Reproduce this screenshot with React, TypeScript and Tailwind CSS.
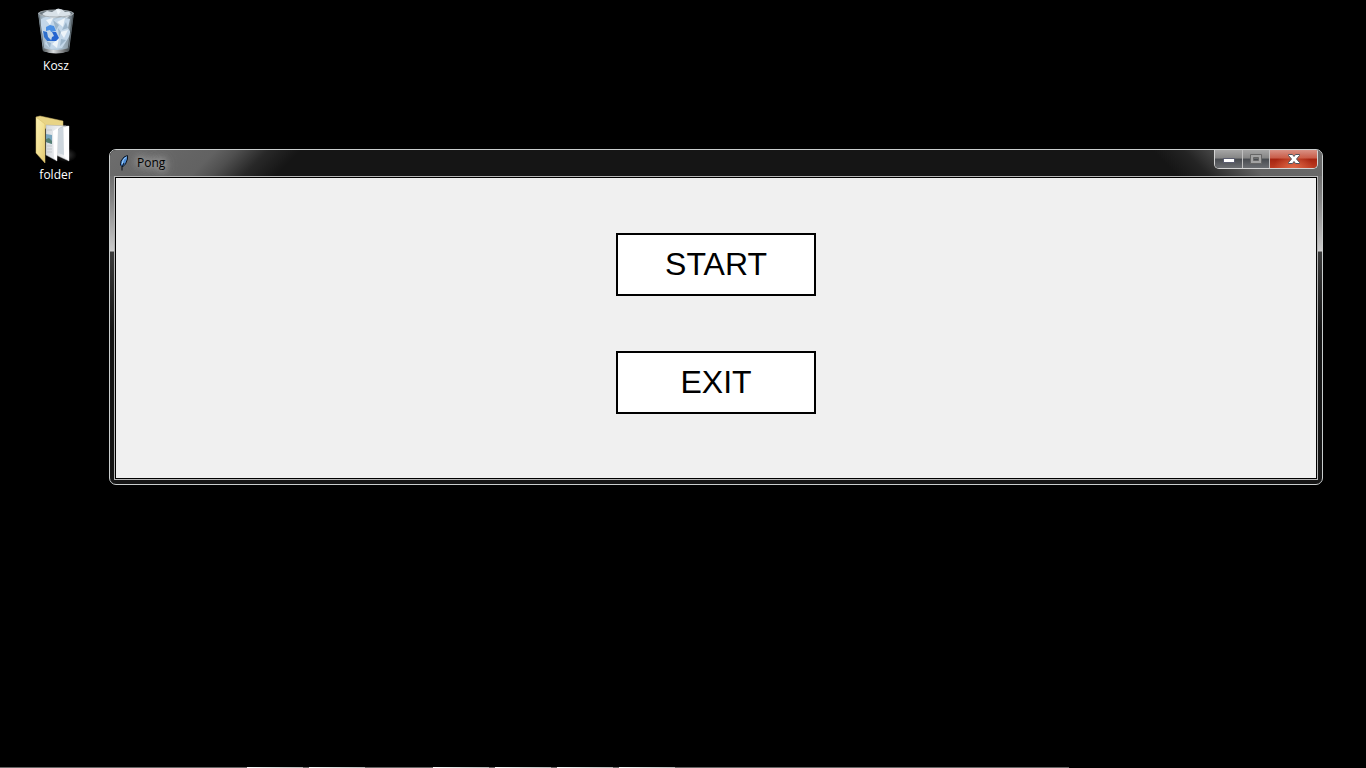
import type { ReactNode } from "react";

const RecycleBinIcon = () => (
  <svg width="48" height="50" viewBox="0 0 48 50" aria-hidden="true">
    <defs>
      <linearGradient id="bin-body" x1="0" x2="1" y1="0" y2="0">
        <stop offset="0" stopColor="#7d8b95" />
        <stop offset="0.15" stopColor="#a9bccb" />
        <stop offset="0.55" stopColor="#b4cbdd" />
        <stop offset="0.85" stopColor="#8a9aa5" />
        <stop offset="1" stopColor="#4d565c" />
      </linearGradient>
      <linearGradient id="bin-base" x1="0" x2="1" y1="0" y2="0">
        <stop offset="0" stopColor="#4b5154" />
        <stop offset="0.4" stopColor="#d9dcde" />
        <stop offset="1" stopColor="#3d4143" />
      </linearGradient>
    </defs>
    <path d="M6 7 L11 45 Q24 49 37 45 L42 7 Z" fill="url(#bin-body)" />
    <path d="M10.500 42 L11 45 Q24 50 37 45 L37.500 42 Q24 46 10.500 42Z" fill="url(#bin-base)" />
    <ellipse cx="24" cy="7.500" rx="17.500" ry="3.500" fill="#6c7880" stroke="#9aa2a7" />
    <path d="M10 8 L15 5 L20 6 L26 2.500 L30 3.500 L33 6 L37 5.500 L39 8 L35 12 L28 10 L20 13 L13 10 Z" fill="#d9e2e9" />
    <path d="M9 13 L16 10 L22 14 L29 11 L38 13 L36 22 L39 27 L35 34 L30 42 L19 43 L13 38 L14 34 L9 24 Z" fill="#c3d7e9" />
    <path d="M14 14 L21 12 L18 19Z M25 16 L33 12 L31 21Z M28 26 L36 24 L32 32Z M20 38 L27 32 L25 42Z M24 3 L29 5 L26 9Z" fill="#edf4f9" />
    <path d="M21 14 L27 19 L24 24Z M34 16 L30 24 L36 22Z M14 35 L19 37 L18 42Z M29 33 L34 34 L28 40Z M26 22 L29 26 L27 31Z" fill="#9cb5ca" />
    <path d="M14 21 L18 19 L22 20 L24 25 L19 26 L18 24 L14 25Z" fill="#4a8fe4" />
    <path d="M11 25 L15 26 L16 31 L20 35 L15 35 L12 31Z" fill="#2f70cc" />
    <path d="M20 26 L24 26 L27 32 L24 35 L19 35 L20 31 L22 30Z" fill="#2464cf" />
    <path d="M6.500 7 Q9 11 24 11 T41.500 7" fill="none" stroke="#aab2b8" />
    <path d="M7 9 L12 44" stroke="#6c7980" />
    <path d="M41 9 L36 44" stroke="#4e585e" />
  </svg>
);

const FolderIcon = () => (
  <svg width="48" height="50" viewBox="0 0 48 50" aria-hidden="true">
    <defs>
      <linearGradient id="folder-front" x1="0" x2="1" y1="0" y2="1">
        <stop offset="0" stopColor="#fbf0b4" />
        <stop offset="0.5" stopColor="#f3e295" />
        <stop offset="1" stopColor="#e2c870" />
      </linearGradient>
      <linearGradient id="folder-paper" x1="0" x2="1" y1="0" y2="0">
        <stop offset="0" stopColor="#d5dade" />
        <stop offset="0.6" stopColor="#eef0f2" />
        <stop offset="1" stopColor="#ffffff" />
      </linearGradient>
      <radialGradient id="folder-shadow">
        <stop offset="0" stopColor="#3c3c3c" />
        <stop offset="1" stopColor="#000000" />
      </radialGradient>
    </defs>
    <ellipse cx="34" cy="40" rx="11" ry="7" fill="url(#folder-shadow)" />
    <path d="M4 2 L8 1 L31 6 L31 14 L14 14Z" fill="#e8d486" stroke="#cdb566" strokeWidth="0.500" />
    <path d="M24 11 L37 11 L37 46 L24 40Z" fill="url(#folder-paper)" stroke="#b4b7b9" strokeWidth="0.500" />
    <path d="M25 15 Q26 12 31 12 L32 40 L26 38Z" fill="#cdd6dd" />
    <path d="M32 13 L37 11 L37 46 L32 41Z" fill="#fff" />
    <path d="M14 10 L34 11 Q26 12 25 17 L25 46 L14 40Z" fill="url(#folder-paper)" stroke="#a9acae" strokeWidth="0.500" />
    <path d="M14 19 L20 20 L20 29 L14 27Z" fill="#78a6bf" />
    <path d="M14 24 L17 23 L20 26 V29 L14 27Z" fill="#557f72" />
    <path d="M15 15 H20 M15 31 H20 M15 34 H20 M15 37 H20" stroke="#c3c8cc" />
    <path d="M21 16 L26 13 L25 46 L22 43Z" fill="#fff" />
    <path d="M4 2 L13 9 L13 48 L4 38Z" fill="url(#folder-front)" stroke="#d6bd68" strokeWidth="0.500" />
  </svg>
);

const FeatherIcon = () => (
  <svg width="12" height="16" viewBox="0 0 12 16" aria-hidden="true">
    <path d="M9.500 .5 L9.500 4 L7.500 9 L4.500 12 L2.500 10 L3 6 L6 2Z" fill="#4b8bd6" stroke="#0c1420" />
    <path d="M8.500 2 L5.500 4.500 L4 9" stroke="#a9d5f8" fill="none" />
    <path d="M6 8 L4 12 L4 15.500" stroke="#080d14" fill="none" />
  </svg>
);

const DesktopItem = ({ label, children }: { label: string; children: ReactNode }) => (
  <a href="#" className="flex h-[69px] w-20 flex-col items-center text-xs leading-4 text-white">
    {children}
    <span className="mt-0.5">{label}</span>
  </a>
);

const MenuButton = ({ children }: { children: ReactNode }) => (
  <button type="button" className="h-[63px] w-[200px] border-2 border-black bg-white pb-0.5 font-['Liberation_Sans',Arial,sans-serif] text-[32px] leading-none text-black">
    {children}
  </button>
);

const greyControl =
  "flex items-center justify-center border-r border-[#c0c0c0] bg-[linear-gradient(#a5a5a5,#858585_45%,#484b50_50%,#6c6e72)]";

const WindowControls = () => (
  <div className="mr-1 flex h-[19px] overflow-hidden rounded-b-[5px] border border-t-0 border-[#d4d4d4]">
    <button type="button" aria-label="Minimize" className={`${greyControl} w-7`}>
      <svg width="12" height="6" viewBox="0 0 12 6" className="mt-1">
        <rect x="0.500" y="0.500" width="11" height="4" fill="#fff" stroke="#5b5d70" />
      </svg>
    </button>
    <button type="button" aria-label="Maximize" disabled className={`${greyControl} w-[27px]`}>
      <svg width="12" height="10" viewBox="0 0 12 10">
        <path fillRule="evenodd" d="M.5 .5H11.500V9.500H.5Z M3.500 3.500V6.500H8.500V3.500Z" fill="#a3a3a3" stroke="#666" />
      </svg>
    </button>
    <button
      type="button"
      aria-label="Close"
      className="flex w-[47px] items-center justify-center bg-[radial-gradient(ellipse_at_bottom,#e06a48_0%,transparent_60%),linear-gradient(#d99184,#c85b47_45%,#a52410_50%,#bd3b22)]"
    >
      <svg width="12" height="10" viewBox="0 0 12 10">
        <path d="M.5 .5H4.500L6 2.500L7.500 .5H11.500V1.500L8.500 5L11.500 8.500V9.500H7.500L6 7.500L4.500 9.500H.5V8.500L3.500 5L.5 1.500Z" fill="#fff" stroke="#51545d" />
      </svg>
    </button>
  </div>
);

const PongWindow = () => (
  <section
    aria-label="Pong"
    className="absolute top-[149px] right-[43px] left-[109px] flex flex-col overflow-hidden rounded-[7px] border border-[#c9cdcd] bg-[linear-gradient(#707070_27px,#858585_50px,#cacaca_100px,#d4d4d4_101px,#3c3c3c_102px,#151515_180px)]"
  >
    <header className="flex h-[26px] items-start justify-between bg-[linear-gradient(135deg,#6d6d6d_0px,#626262_75px,#505050_90px,#282828_112px,#151515_135px,transparent_136px),linear-gradient(225deg,#6b6b6b_0px,#626262_60px,#454545_78px,#242424_98px,#151515_120px)]">
      <div className="flex items-center pt-1 pl-2">
        <FeatherIcon />
        <h1 className="px-[7px] text-xs leading-[18px] text-black [text-shadow:0_0_6px_#b8b8b8,0_0_10px_#b8b8b8,0_0_14px_#b0b0b0]">Pong</h1>
      </div>
      <WindowControls />
    </header>
    <div className="mx-1 mb-1 border border-[#b5b5b5]">
      <main className="flex flex-col items-center gap-[55px] border border-black bg-[#f0f0f0] pt-[55px] pb-16">
        <MenuButton>START</MenuButton>
        <MenuButton>EXIT</MenuButton>
      </main>
    </div>
  </section>
);

const TaskbarTab = () => <span className="h-px w-14 bg-linear-to-r from-white to-[#b8b8b8]" />;

export default function App() {
  return (
    <div className="relative flex min-h-screen flex-col justify-between overflow-hidden bg-black font-['Open_Sans','Noto_Sans',sans-serif]">
      <nav aria-label="Desktop" className="flex flex-col gap-10 pt-1.5 pl-4">
        <DesktopItem label="Kosz">
          <RecycleBinIcon />
        </DesktopItem>
        <DesktopItem label="folder">
          <FolderIcon />
        </DesktopItem>
      </nav>
      <PongWindow />
      <footer aria-label="Taskbar" className="flex h-px w-[1069px] max-w-full bg-[#686666] pl-[247px]">
        <div className="flex gap-1.5">
          <TaskbarTab />
          <TaskbarTab />
        </div>
        <div className="ml-[68px] flex gap-1.5">
          <TaskbarTab />
          <TaskbarTab />
          <TaskbarTab />
          <TaskbarTab />
        </div>
      </footer>
    </div>
  );
}
